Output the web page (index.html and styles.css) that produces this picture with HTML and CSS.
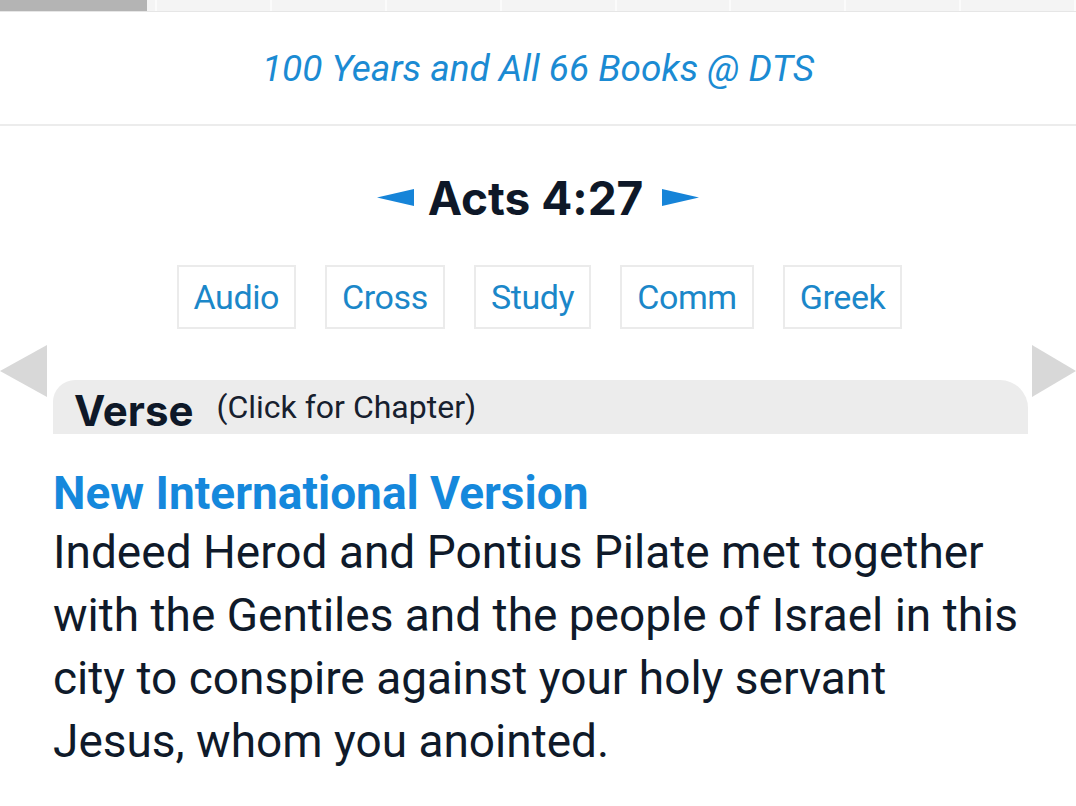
FILE: index.html
```html
<!DOCTYPE html>
<html lang="en">
<head>
    <meta charset="UTF-8">
    <title>Acts 4:27</title>
    <link rel="stylesheet" href="styles.css">
</head>
<body>
    <div class="tabstrip">
        <span class="seg active"></span>
        <span class="seg gap"></span>
        <span class="seg"></span>
        <span class="seg"></span>
        <span class="seg"></span>
        <span class="seg"></span>
        <span class="seg"></span>
        <span class="seg"></span>
        <span class="seg"></span>
        <span class="seg"></span>
    </div>
    <div class="banner">
        <a href="#">100 Years and All 66 Books @ DTS</a>
    </div>
    <div class="main">
        <h1 class="ref">
            <a href="#" class="arrow prev"><svg width="37" height="17" viewBox="0 0 37 17"><polygon points="0,8.5 37,0 37,17" fill="#1684d8"/></svg></a>
            <span>Acts 4:27</span>
            <a href="#" class="arrow next"><svg width="37" height="17" viewBox="0 0 37 17"><polygon points="0,0 37,8.5 0,17" fill="#1684d8"/></svg></a>
        </h1>
        <div class="tools">
            <a href="#">Audio</a>
            <a href="#">Cross</a>
            <a href="#">Study</a>
            <a href="#">Comm</a>
            <a href="#">Greek</a>
        </div>
        <div class="chapter">
            <a href="#" class="side left"></a>
            <div class="verseTab">
                <span class="label">Verse</span>
                <span class="hint">(Click for Chapter)</span>
            </div>
            <a href="#" class="side right"></a>
        </div>
        <div class="version">
            <a href="#" class="vname">New International Version</a>
            <p>Indeed Herod and Pontius Pilate met together with the Gentiles and the people of Israel in this city to conspire against your holy servant Jesus, whom you anointed.</p>
        </div>
    </div>
</body>
</html>
```

FILE: styles.css
```css
body {
	margin: 0;
	padding: 0;
	background: #fff;
	font-family: Roboto, "Noto Sans", sans-serif;
	color: #0f1a2a;
}
a {
	text-decoration: none;
}
.tabstrip {
	display: flex;
	height: 11px;
	background: #f4f4f4;
	border-bottom: 1px solid #e6e6e6;
}
.seg {
	flex: 1;
	border-right: 2px solid #fbfbfb;
}
.seg.active {
	flex: none;
	width: 147px;
	background: #b4b4b4;
	border-right: none;
}
.seg.gap {
	flex: none;
	width: 8px;
}
.banner {
	text-align: center;
	height: 114px;
	border-bottom: 2px solid #ececec;
	box-sizing: border-box;
}
.banner a {
	display: inline-block;
	margin-top: 35px;
	font-size: 37px;
	font-style: italic;
	color: #1b8bd3;
}
.ref {
	margin: 0;
	padding-top: 44px;
	display: flex;
	justify-content: center;
	align-items: center;
	font-family: Inter, sans-serif;
	font-feature-settings: "calt" 0;
	font-size: 46px;
	font-weight: 700;
	line-height: 56px;
	color: #0e1828;
}
.ref .arrow {
	display: block;
	height: 17px;
	margin-top: -2px;
}
.ref .arrow svg {
	display: block;
}
.ref .prev {
	margin-right: 14px;
}
.ref .next {
	margin-left: 19px;
}
.tools {
	display: flex;
	justify-content: center;
	gap: 29px;
	margin-top: 39px;
	padding-left: 3px;
}
.tools a {
	display: block;
	height: 64px;
	box-sizing: border-box;
	line-height: 60px;
	padding: 0 15px;
	border: 2px solid #ebebeb;
	font-size: 34px;
	letter-spacing: -0.4px;
	color: #1b87c9;
}
.chapter {
	display: flex;
	align-items: flex-start;
	margin-top: 16px;
}
.side {
	display: block;
	width: 0;
	height: 0;
	border-top: 26px solid transparent;
	border-bottom: 26px solid transparent;
}
.side.left {
	border-right: 47px solid #d8d8d8;
	margin-right: 6px;
}
.side.right {
	border-left: 44px solid #d8d8d8;
	margin-left: 4px;
}
.verseTab {
	flex: 1;
	margin-top: 35px;
	height: 54px;
	background: #ececec;
	border-radius: 22px 28px 0 0;
	padding-left: 21px;
	display: flex;
	align-items: center;
	box-sizing: border-box;
}
.verseTab .label {
	font-family: Inter, sans-serif;
	font-weight: 700;
	font-size: 42px;
	color: #0e1828;
	margin-top: 6px;
}
.verseTab .hint {
	font-size: 32px;
	margin-left: 23px;
	color: #17202e;
}
.version {
	padding: 31px 51px 0 53px;
}
.vname {
	font-size: 46px;
	font-weight: 700;
	color: #1588dc;
	line-height: 56px;
}
.version p {
	margin: 0;
	font-size: 46px;
	line-height: 63px;
}
```
